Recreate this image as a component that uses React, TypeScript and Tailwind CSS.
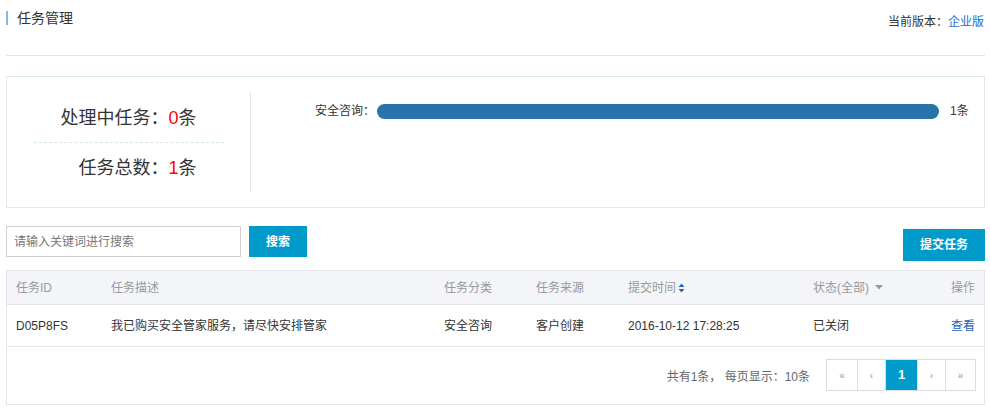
import React from "react";

const font = { fontFamily: '"Liberation Sans", "Noto Sans CJK SC", sans-serif' };

function StatsPanel() {
  return (
    <div className="mt-[20px] flex h-[132px] border border-[#dde9f1] bg-white">
      <div className="flex w-[243px] flex-col items-center justify-center pt-[4px]">
        <div className="flex h-[48px] w-[190px] items-center justify-end border-b border-dashed border-[#d6e6ef] pr-[27px] text-[18px] text-[#333]">
          处理中任务：<span className="text-[#f00]">0</span>条
        </div>
        <div className="flex h-[50px] w-[190px] items-center justify-end pr-[27px] text-[18px] text-[#333]">
          任务总数：<span className="text-[#f00]">1</span>条
        </div>
      </div>
      <div className="my-[15px] w-px bg-[#dde9f1]" />
      <div className="flex flex-1 items-start pt-[25px]">
        <div className="flex w-full items-center text-[12px] text-[#333]">
          <span className="ml-[64px] w-[62px]">安全咨询：</span>
          <div className="h-[15px] w-[562px] rounded-full bg-[#2873aa]" />
          <span className="ml-[11px]">1条</span>
        </div>
      </div>
    </div>
  );
}

function Th({ children, className = "" }: { children: React.ReactNode; className?: string }) {
  return <div className={`flex items-center ${className}`}>{children}</div>;
}

export default function App() {
  const pages = [
    { t: "«", w: "w-[30px]" },
    { t: "‹", w: "w-[28px]" },
    { t: "1", w: "w-[32px]" },
    { t: "›", w: "w-[28px]" },
    { t: "»", w: "w-[30px]" },
  ];
  return (
    <div className="min-h-[414px] bg-white pl-[6px] pr-[5px] text-[#333]" style={font}>
      <div className="flex h-[56px] items-start justify-between border-b border-[#e3e3e3] pt-[11px]">
        <div className="flex items-center">
          <div className="h-[14px] w-[2px] bg-[#88b7e0]" />
          <span className="ml-[9px] text-[14px] leading-[14px] text-[#333]">任务管理</span>
        </div>
        <div className="mr-[1px] pt-[4px] text-[12px] leading-[14px] text-[#333]">
          当前版本：<span className="text-[#1a6dca]">企业版</span>
        </div>
      </div>

      <StatsPanel />

      <div className="mt-[18px] flex items-start justify-between">
        <div className="flex items-center gap-[8px]">
          <div className="flex h-[31px] w-[235px] items-center border border-[#d0d0d0] px-[7px] text-[12px] text-[#777]">
            请输入关键词进行搜索
          </div>
          <button className="h-[31px] w-[58px] bg-[#009bcb] text-[12px] font-bold text-white">搜索</button>
        </div>
        <button className="mt-[3px] h-[32px] w-[82px] bg-[#009bcb] text-[12px] font-bold text-white">提交任务</button>
      </div>

      <div className="mt-[9px] border border-[#e1e6eb] text-[12px]">
        <div className="grid h-[34px] grid-cols-[95px_333px_92px_92px_185px_1fr_60px] border-b border-[#e1e6eb] bg-[#f4f5f9] pl-[9px] text-[#999]">
          <Th>任务ID</Th>
          <Th>任务描述</Th>
          <Th>任务分类</Th>
          <Th>任务来源</Th>
          <Th>
            提交时间
            <svg className="ml-[2px]" width="7" height="10" viewBox="0 0 7 10">
              <path d="M3.5 0.5 L6.5 4 L0.5 4 Z" fill="#1a6dca" />
              <path d="M3.5 9.5 L6.5 6 L0.5 6 Z" fill="#1a6dca" />
            </svg>
          </Th>
          <Th>
            状态(全部)
            <svg className="ml-[6px]" width="8" height="5" viewBox="0 0 8 5">
              <path d="M0 0 L8 0 L4 4.5 Z" fill="#999" />
            </svg>
          </Th>
          <Th className="justify-end pr-[9px]">操作</Th>
        </div>
        <div className="grid h-[42px] grid-cols-[95px_333px_92px_92px_185px_1fr_60px] border-b border-[#e1e6eb] pl-[9px] text-[#333]">
          <Th>D05P8FS</Th>
          <Th>我已购买安全管家服务，请尽快安排管家</Th>
          <Th>安全咨询</Th>
          <Th>客户创建</Th>
          <Th>2016-10-12 17:28:25</Th>
          <Th>已关闭</Th>
          <Th className="justify-end pr-[9px] text-[#1a5fbf]">查看</Th>
        </div>
        <div className="flex h-[57px] items-start justify-end pr-[8px] pt-[12px]">
          <span className="mr-[16px] mt-[9px] text-[#666]">共有1条， 每页显示：10条</span>
          <div className="flex h-[32px] border border-[#ddd]">
            {pages.map((p, i) => (
              <div
                key={p.t}
                className={`flex items-center justify-center ${p.w} ${i > 0 ? "border-l border-[#ddd]" : ""} ${
                  p.t === "1" ? "bg-[#009bcb] text-[13px] font-bold text-white" : "text-[10px] text-[#999]"
                }`}
              >
                {p.t}
              </div>
            ))}
          </div>
        </div>
      </div>
    </div>
  );
}
